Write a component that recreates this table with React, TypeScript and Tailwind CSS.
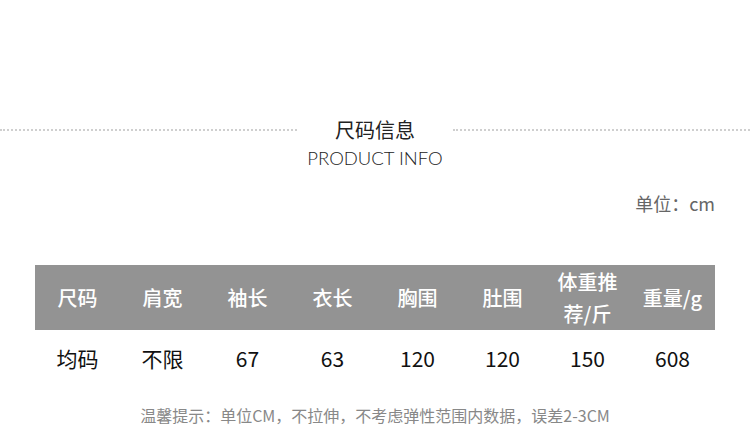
const headers = ['尺码', '肩宽', '袖长', '衣长', '胸围', '肚围', '体重推\n荐/斤', '重量/g'];
const row = ['均码', '不限', '67', '63', '120', '120', '150', '608'];

export default function App() {
  return (
    <div className="w-[750px] h-[429px] bg-white overflow-hidden" style={{ fontFamily: '"Noto Sans CJK SC", "Noto Sans", sans-serif' }}>
      <div className="pt-[115px] flex items-center">
        <div className="flex-1 border-t-2 border-dotted border-[#cfcfcf]" />
        <div className="w-[156px] text-center text-[20px] leading-[30px] text-[#222]">尺码信息</div>
        <div className="flex-1 border-t-2 border-dotted border-[#cfcfcf]" />
      </div>
      <div className="text-center text-[18.5px] leading-[26px] text-[#222] font-light" style={{ fontFamily: 'Lato, "Noto Sans", sans-serif' }}>
        PRODUCT INFO
      </div>
      <div className="mt-[17px] pr-[35px] text-right text-[18px] leading-[30px] text-[#666]">单位：cm</div>

      <div className="mt-[47px] mx-[35px]">
        <div className="grid grid-cols-8 h-[65px] bg-[#939393] text-white text-[20px] font-medium">
          {headers.map((h, i) => (
            <div key={i} className="flex items-center justify-center text-center leading-[32px] whitespace-pre-line">{h}</div>
          ))}
        </div>
        <div className="grid grid-cols-8 h-[57px] text-[#111] text-[21px]">
          {row.map((c, i) => (
            <div key={i} className="flex items-center justify-center">{c}</div>
          ))}
        </div>
      </div>

      <div className="mt-[18px] text-center text-[16px] leading-[20px] text-[#888]">温馨提示：单位CM，不拉伸，不考虑弹性范围内数据，误差2-3CM</div>
    </div>
  );
}
